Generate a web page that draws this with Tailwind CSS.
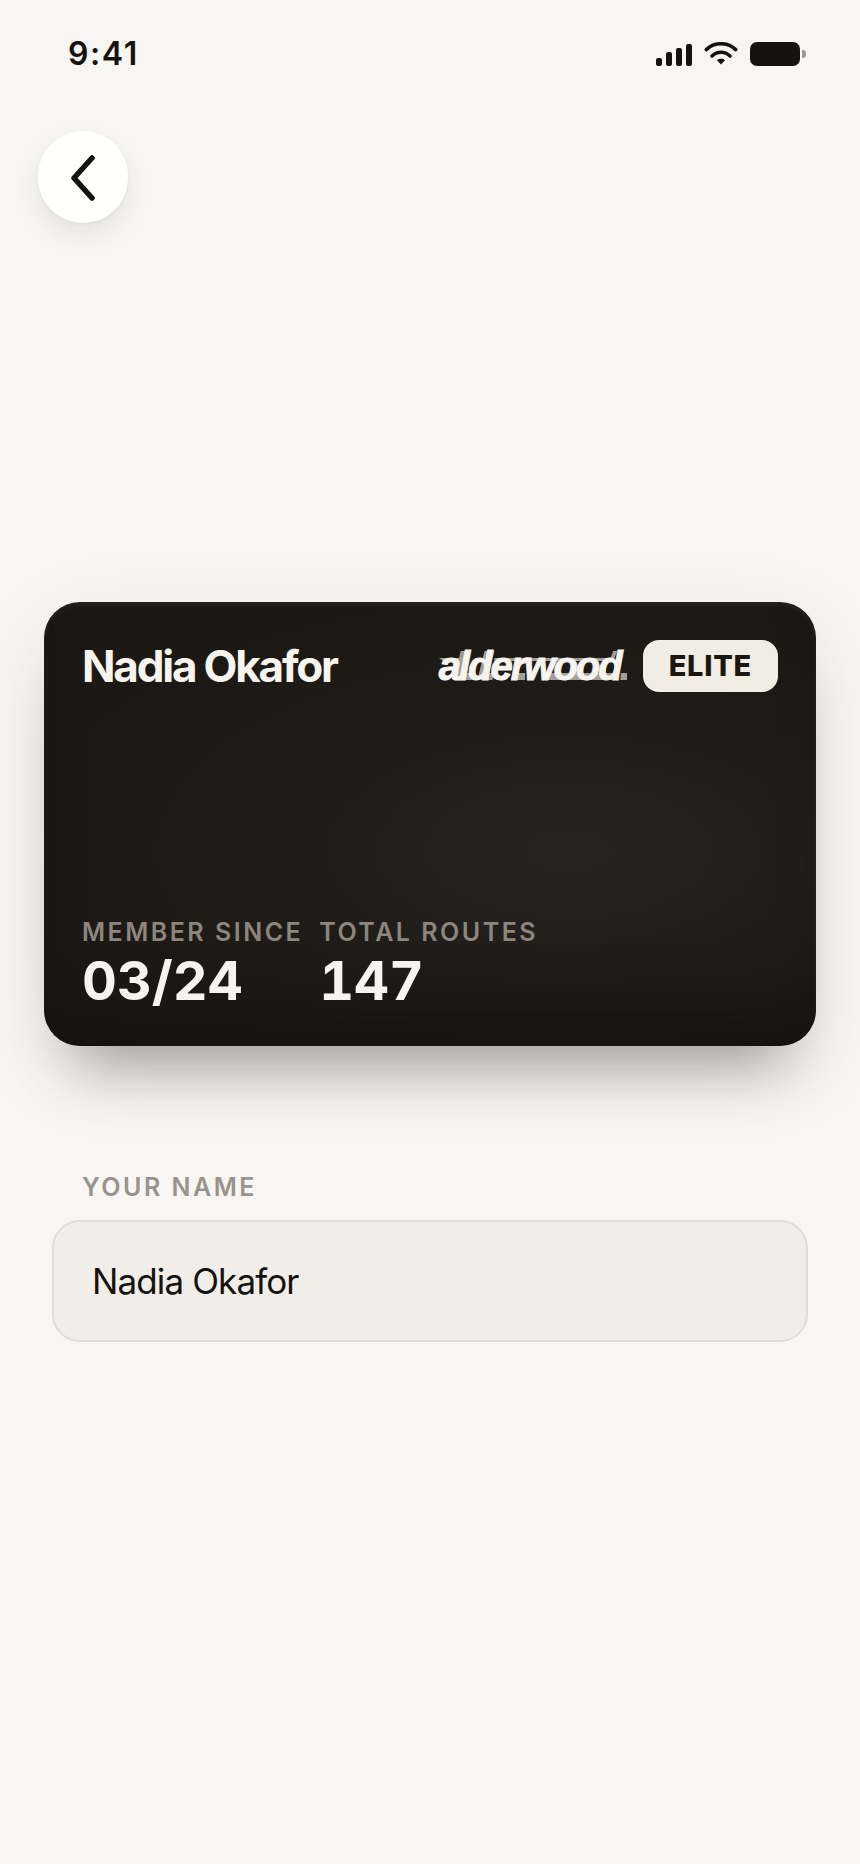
<!DOCTYPE html>
<html lang="en">
<head>
    <meta charset="UTF-8">
    <meta name="viewport" content="width=device-width, initial-scale=1.0">
    <title>Alderwood Membership</title>

    <!-- Tailwind CSS -->
    <script src="https://cdn.jsdelivr.net/npm/@tailwindcss/browser@4"></script>
</head>
<body class="min-h-screen bg-[#f7f6f2] font-['Inter',sans-serif] text-[#14130f]">

    <!-- Status Bar -->
    <div class="flex items-center justify-between pt-9 pr-[54px] pl-17">
        <span class="text-[32px] leading-9 font-semibold tracking-wider">9:41</span>
        <div class="flex items-center gap-3">
            <svg class="h-6 w-9" viewBox="0 0 36 24" fill="currentColor" aria-hidden="true">
                <rect x="0" y="16" width="6" height="8" rx="2"/>
                <rect x="10" y="10" width="6" height="14" rx="2"/>
                <rect x="20" y="6" width="6" height="18" rx="2"/>
                <rect x="30" y="2" width="6" height="22" rx="2"/>
            </svg>
            <svg class="h-6 w-[34px]" viewBox="0 0 34 24" fill="none" stroke="currentColor" stroke-width="3.6" stroke-linecap="round" aria-hidden="true">
                <path d="M2.3 7.6C10.5-.2 23.5-.2 31.7 7.6"/>
                <path d="M8 14c5.2-5 12.8-5 18 0"/>
                <path d="M13 18.2c2.3-1.9 5.7-1.9 8 0L17 22.6z" fill="currentColor" stroke="none"/>
            </svg>
            <svg class="h-6 w-14" viewBox="0 0 56 24" fill="currentColor" aria-hidden="true">
                <rect x="0" y="0" width="50" height="24" rx="7"/>
                <path d="M52 8h1a3 3 0 0 1 3 3v2a3 3 0 0 1-3 3h-1z" opacity=".4"/>
            </svg>
        </div>
    </div>

    <!-- Back Button -->
    <div class="px-9.5 pt-[59px]">
        <button type="button" aria-label="Back" class="flex h-[92px] w-[90px] items-center justify-center rounded-full bg-[#fffffd] shadow-[0_12px_28px_rgba(20,19,15,0.08),0_2px_4px_rgba(20,19,15,0.04)]">
            <svg class="h-12 w-8" viewBox="0 0 32 48" fill="none" stroke="currentColor" stroke-width="5.5" stroke-linecap="round" stroke-linejoin="round" aria-hidden="true">
                <path d="M25 5 7 25 25 45"/>
            </svg>
        </button>
    </div>

    <!-- Member Card -->
    <section class="mx-11 mt-[379px] flex min-h-[444px] flex-col justify-between rounded-[36px] bg-[radial-gradient(ellipse_at_68%_56%,#28251f_0%,#1f1c18_40%,#1c1914_75%)] px-9.5 pt-9.5 pb-8 text-[#f7f3ed] shadow-[0_48px_60px_-32px_rgba(20,15,12,0.36),0_24px_90px_rgba(20,15,12,0.08),inset_0_3px_4px_rgba(255,255,255,0.05),inset_0_-60px_60px_-30px_rgba(16,12,8,0.5)]">
        <div class="flex items-center justify-between">
            <h1 class="text-[44px] leading-[52px] font-bold tracking-tighter">Nadia Okafor</h1>
            <div class="flex items-center gap-4">
                <span class="relative pr-1.5 font-['Liberation_Sans',sans-serif] text-[40px] leading-[48px] font-bold italic tracking-tighter [-webkit-text-stroke:1px_#f7f3ed]">
                    <!-- speed streaks behind the wordmark -->
                    <svg class="absolute inset-0 h-full w-full" viewBox="0 0 190 48" preserveAspectRatio="none" fill="#a19d97" stroke="none" aria-hidden="true">
                        <path d="M0 16h26v3H4zM22 9h10l-7 28H15zM46 9h10l-7 28H39z"/>
                        <path d="M56 16h118l-1 3H56zM176 9h4l-3 8h-4z"/>
                        <path d="M15 31h20l-2 7H15zM42 31h14l-2 7H42zM80 31h7v7h-9zM104 31h76l-2 7h-74zM184 31h6v7h-7z"/>
                    </svg>
                    <span class="relative">alderwood</span>
                </span>
                <span class="rounded-2xl bg-[#f2ede4] px-6.5 py-2 text-[29px] leading-9 font-extrabold tracking-wide text-[#1a1710]">ELITE</span>
            </div>
        </div>
        <dl class="flex gap-4">
            <div>
                <dt class="text-[25px] leading-8 font-semibold tracking-widest text-[#8c867d]">MEMBER SINCE</dt>
                <dd class="text-[54px] leading-[66px] font-bold tabular-nums">03/24</dd>
            </div>
            <div>
                <dt class="text-[25px] leading-8 font-semibold tracking-widest text-[#8c867d]">TOTAL ROUTES</dt>
                <dd class="text-[54px] leading-[66px] font-bold tabular-nums">147</dd>
            </div>
        </dl>
    </section>

    <!-- Name Field -->
    <form class="mx-13 mt-[125px]">
        <label for="name" class="block pl-7.5 text-[25px] leading-8 font-semibold tracking-widest text-[#98948c]">YOUR NAME</label>
        <input id="name" type="text" value="Nadia Okafor" class="mt-[17px] h-[122px] w-full rounded-[28px] border-2 border-[#e0ddd8] bg-[#f1eeea] px-9.5 text-[35px] tracking-tight outline-none">
    </form>

</body>
</html>
